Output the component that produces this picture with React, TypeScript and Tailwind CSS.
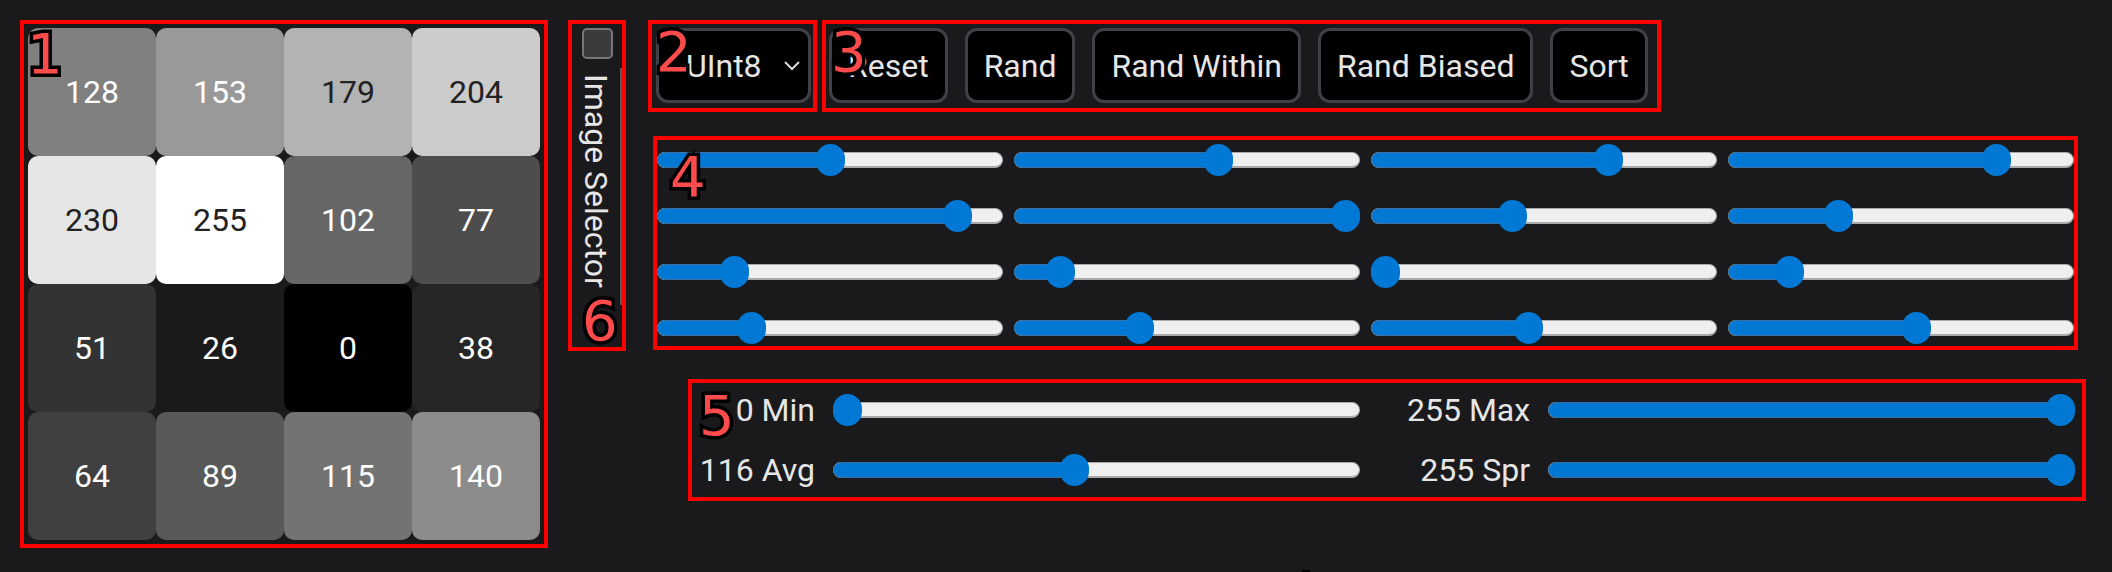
import React from 'react';

const values = [128, 153, 179, 204, 230, 255, 102, 77, 51, 26, 0, 38, 64, 89, 115, 140];

const Tag: React.FC<{ n: string; className: string }> = ({ n, className }) => (
  <span
    className={`absolute z-10 font-['DejaVu_Sans',sans-serif] text-[56px] leading-none text-[#ff4b4b] [-webkit-text-stroke:7px_#000] [paint-order:stroke_fill] ${className}`}
  >
    {n}
  </span>
);

const Slider: React.FC<{ value: number }> = ({ value }) => {
  const f = value / 255;
  return (
    <div className="relative h-[32px] w-full">
      <div className="absolute left-0 right-0 top-[8px] h-[16px] rounded-full bg-[#efefef] border border-[#a9a9a9] border-b-2" />
      <div
        className="absolute left-0 top-[8px] h-[16px] rounded-full bg-[#0078d4] border border-[#3b72a6]"
        style={{ width: `calc((100% - 29px) * ${f} + 14.5px)` }}
      />
      <div className="absolute top-0 h-[32px] w-[29px] rounded-full bg-[#0078d4]" style={{ left: `calc((100% - 29px) * ${f})` }} />
    </div>
  );
};

const Btn: React.FC<{ label: string }> = ({ label }) => (
  <button className="h-[75px] px-4 rounded-[12px] border-[3px] border-[#404048] bg-black text-[32px] leading-none text-[#e6e6e6]">
    {label}
  </button>
);

const Stat: React.FC<{ label: string; value: number }> = ({ label, value }) => (
  <div className="flex items-center">
    <span className="w-[123px] mr-[18px] text-right text-[32px] leading-none text-[#e6e6e6] whitespace-nowrap">{label}</span>
    <div className="flex-1">
      <Slider value={value} />
    </div>
  </div>
);

export default function App() {
  return (
    <div className="w-[2112px] h-[572px] overflow-hidden bg-[#1a1a1d] flex items-start pl-[20px] pt-[20px] font-['Roboto',sans-serif]">
      {/* 1: pixel grid */}
      <div className="relative border-4 border-[#ff0000] p-[4px]">
        <Tag n="1" className="top-[2px] left-[3px]" />
        <div className="grid grid-cols-4">
          {values.map((v, i) => (
            <div
              key={i}
              className={`w-[128px] h-[128px] rounded-[10px] flex items-center justify-center text-[32px] ${v >= 170 ? 'text-[#222]' : 'text-white'}`}
              style={{ backgroundColor: `rgb(${v},${v},${v})` }}
            >
              {v}
            </div>
          ))}
        </div>
      </div>

      {/* 6: image selector */}
      <div className="relative ml-[20px] w-[58px] h-[331px] border-4 border-[#ff0000] flex flex-col">
        <div className="ml-[10px] mt-[4px] w-[31px] h-[31px] rounded-[5px] bg-[#3b3b3d] border-2 border-[#77777a]" />
        <div className="mt-[9px] h-[237px] border-r-2 border-[#5a5a5e] pl-[8px] pt-[6px]">
          <span className="[writing-mode:vertical-rl] text-[32px] leading-[32px] text-[#e6e6e6] whitespace-nowrap">Image Selector</span>
        </div>
        <Tag n="6" className="top-[269px] left-[10px]" />
      </div>

      <div className="ml-[22px] flex flex-col">
        <div className="flex gap-[5px]">
          {/* 2: type select */}
          <div className="relative border-4 border-[#ff0000] pl-[4px] pr-[2px] pt-[4px] pb-[5px]">
            <Tag n="2" className="top-0 left-[4px]" />
            <div className="w-[155px] h-[75px] rounded-[12px] border-[3px] border-[#404048] bg-black flex items-center justify-between pl-[27px] pr-[8px]">
              <span className="text-[32px] leading-none text-[#e6e6e6]">UInt8</span>
              <svg width="16" height="10" viewBox="0 0 16 10">
                <polyline points="1,1 8,8 15,1" fill="none" stroke="#dcdcdc" strokeWidth="2" />
              </svg>
            </div>
          </div>
          {/* 3: actions */}
          <div className="relative border-4 border-[#ff0000] pl-[3px] pr-[5px] pt-[4px] pb-[5px] flex gap-[17px] w-[839px]">
            <Tag n="3" className="top-0 left-[5px]" />
            <Btn label="Reset" />
            <Btn label="Rand" />
            <Btn label="Rand Within" />
            <Btn label="Rand Biased" />
            <Btn label="Sort" />
          </div>
        </div>

        {/* 4: per-pixel sliders */}
        <div className="relative mt-[24px] ml-[5px] w-[1425px] border-4 border-[#ff0000] pt-[4px] pb-[2px]">
          <Tag n="4" className="top-[9px] left-[13px]" />
          <div className="grid grid-cols-4 gap-x-[11px] gap-y-[24px]">
            {values.map((v, i) => (
              <Slider key={i} value={v} />
            ))}
          </div>
        </div>

        {/* 5: stats */}
        <div className="relative mt-[29px] ml-[40px] w-[1398px] border-4 border-[#ff0000] py-[11px] pr-[7px]">
          <Tag n="5" className="top-[5px] left-[7px]" />
          <div className="grid grid-cols-2 gap-x-[47px] gap-y-[28px]">
            <Stat label="0 Min" value={0} />
            <Stat label="255 Max" value={255} />
            <Stat label="116 Avg" value={116} />
            <Stat label="255 Spr" value={255} />
          </div>
        </div>

        <div className="mt-[69px] ml-[654px] w-[8px] h-[2px] bg-black" />
      </div>
    </div>
  );
}
